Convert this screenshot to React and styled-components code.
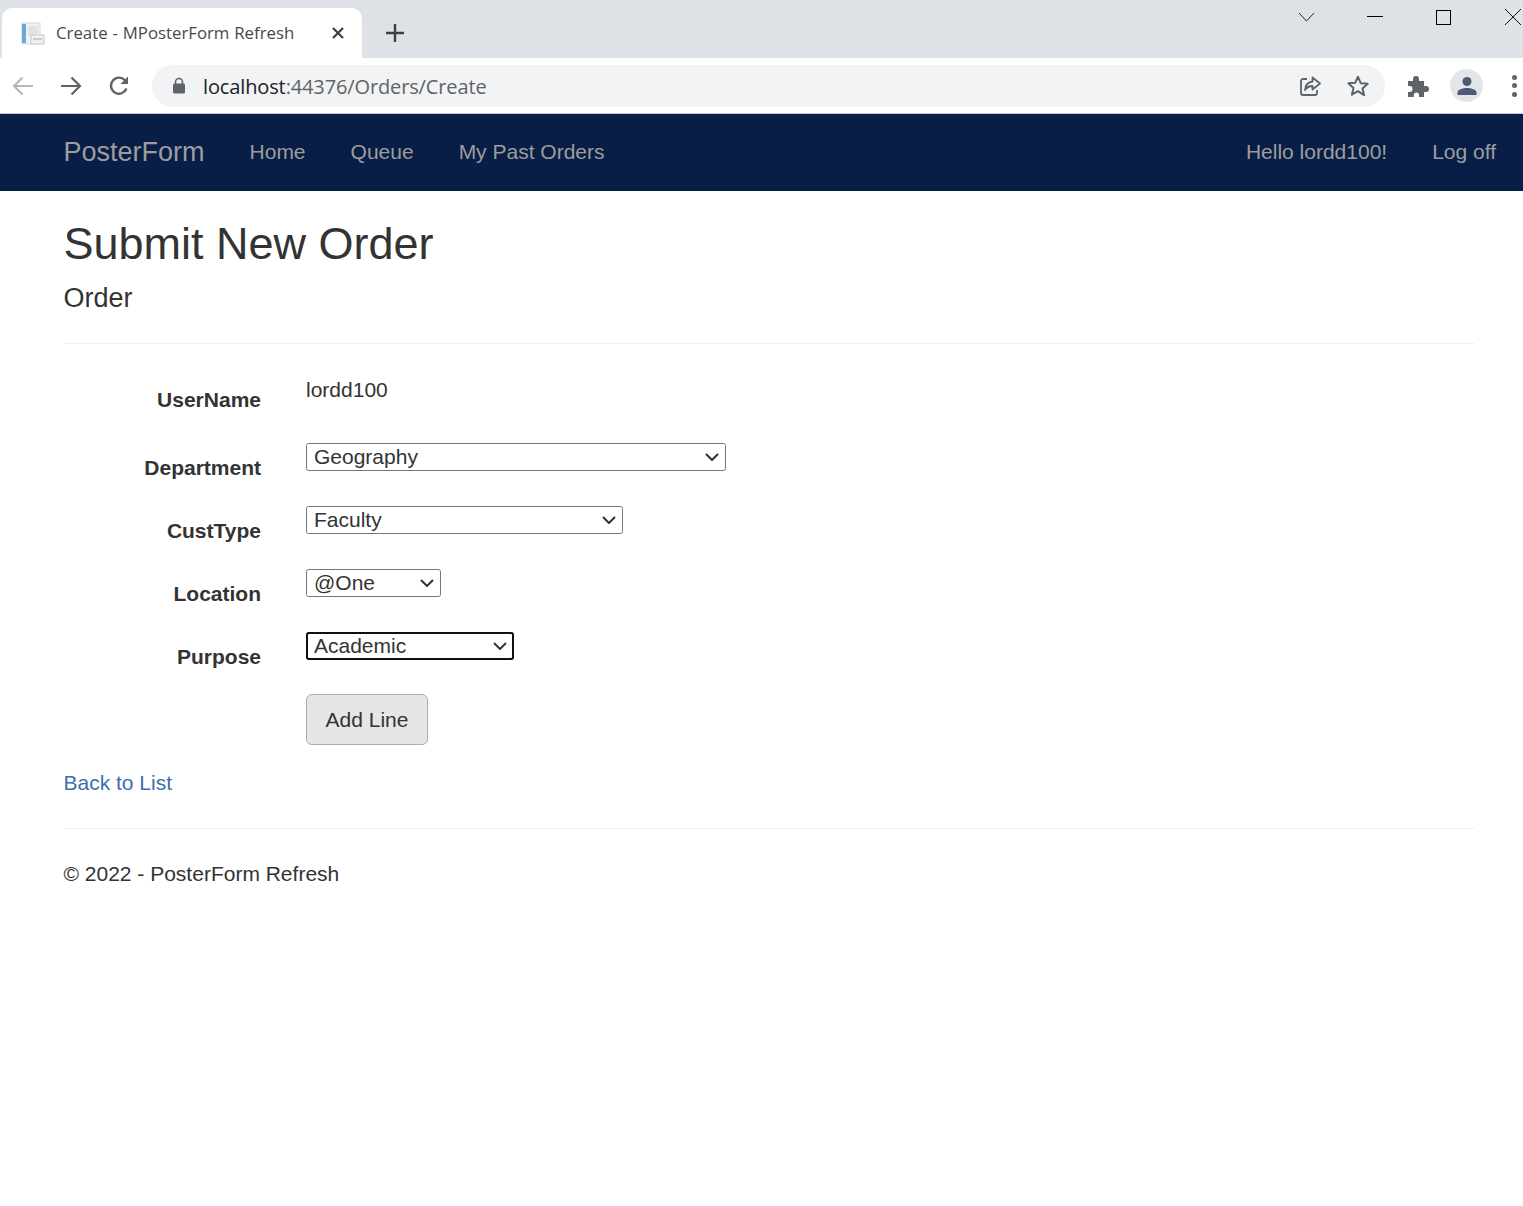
import React from "react";
import styled, { createGlobalStyle } from "styled-components";

const Global = createGlobalStyle`
    html, body{
        margin: 0;
        background: #fff;
        font-family: "Liberation Sans", Arial, sans-serif;
        color: #333;
    }
`

const TabStrip = styled.div`
    height: 58px;
    background: #dee1e6;
    display: flex;
    align-items: flex-end;
    padding-left: 2px;
    position: relative;
`

const Tab = styled.div`
    width: 360px;
    height: 50px;
    box-sizing: border-box;
    background: #fff;
    border-radius: 10px 10px 0 0;
    display: flex;
    align-items: center;
    padding: 0 16px 0 17px;
    color: #45494d;
    font: 16.8px "Open Sans", sans-serif;
    word-spacing: 0.5px;
    svg{ flex: none; }
`

const TabTitle = styled.span`
    flex: 1;
    margin-left: 11px;
    margin-top: -1px;
    white-space: nowrap;
`

const NewTab = styled.div`
    width: 18px;
    height: 18px;
    margin: 0 0 16px 24px;
    display: flex;
`

const WindowControls = styled.div`
    position: absolute;
    top: 8px;
    right: 2px;
    display: flex;
    align-items: center;
    gap: 53px;
    svg{ display: block; }
`

const Toolbar = styled.div`
    height: 55px;
    background: #fff;
    border-bottom: 1px solid #c8ccd4;
    display: flex;
    align-items: center;
    padding: 0 0 0 11px;
    box-sizing: content-box;
`

const NavIcon = styled.div`
    width: 24px;
    height: 24px;
    margin-right: 24px;
    display: flex;
    flex: none;
`

const Omnibox = styled.div`
    width: 1233px;
    height: 42px;
    margin-left: -3px;
    border-radius: 21px;
    background: #f1f3f4;
    display: flex;
    align-items: center;
    padding: 0 15px 0 20px;
    box-sizing: border-box;
    flex: none;
`

const Url = styled.div`
    flex: 1;
    margin-left: 17px;
    padding-top: 2px;
    font: 20px "Open Sans", sans-serif;
    letter-spacing: -0.13px;
    color: #5f6368;
    white-space: nowrap;
    b{
        font-weight: 400;
        color: #202124;
    }
`

const OmniIcon = styled.div`
    display: flex;
    margin-left: ${p => p.$gap || 0}px;
`

const ToolIcons = styled.div`
    display: flex;
    align-items: center;
    margin-left: 21px;
`

const Avatar = styled.div`
    width: 33px;
    height: 33px;
    border-radius: 50%;
    background: #e3e5ea;
    margin-left: 20px;
    display: flex;
    align-items: center;
    justify-content: center;
`

const Dots = styled.div`
    margin-left: 29px;
    display: flex;
    flex-direction: column;
    gap: 3.5px;
    i{
        width: 5px;
        height: 5px;
        border-radius: 50%;
        background: #5f6368;
    }
`

const Navbar = styled.nav`
    height: 77px;
    background: #081e46;
    display: flex;
    align-items: center;
    padding: 0 27px 0 63.5px;
`

const Brand = styled.a`
    font-size: 27px;
    color: #9d9d9d;
    margin-right: 45px;
`

const NavLink = styled.a`
    font-size: 21px;
    color: #9d9d9d;
    padding-bottom: 2px;
    margin-right: ${p => p.$last ? 0 : 45}px;
`

const Spacer = styled.div`
    flex: 1;
`

const Page = styled.main`
    padding: 0 49px 0 63.5px;
`

const Title = styled.h2`
    font-size: 45px;
    font-weight: 400;
    line-height: 50px;
    margin: 0;
    padding-top: 28px;
`

const SubTitle = styled.h4`
    font-size: 27px;
    font-weight: 400;
    line-height: 30px;
    margin: 14px 0 30px;
`

const Rule = styled.hr`
    border: 0;
    border-top: 1px solid #eee;
    margin: 0;
`

const Form = styled.div`
    padding-top: 29px;
    display: flex;
    flex-direction: column;
`

const Row = styled.div`
    display: flex;
    height: ${p => p.$h}px;
`

const Label = styled.label`
    width: 197.5px;
    flex: none;
    text-align: right;
    font-size: 21px;
    font-weight: 700;
    line-height: 30px;
    padding-top: ${p => p.$top}px;
    white-space: nowrap;
`

const Field = styled.div`
    margin-left: 45px;
    font-size: 21px;
    line-height: 30px;
`

const StaticValue = styled.div`
    padding-top: 2px;
`

const SelectBox = styled.div`
    position: relative;
    width: ${p => p.$w}px;
    height: 28px;
    svg{
        position: absolute;
        top: 10px;
        right: 7px;
        pointer-events: none;
    }
`

const Select = styled.select`
    display: block;
    width: 100%;
    height: 28px;
    box-sizing: border-box;
    appearance: none;
    font: 21px/24px "Liberation Sans", Arial, sans-serif;
    color: #333;
    background: #fff;
    border: 1px solid #767676;
    border-radius: 2.5px;
    padding: 0 0 0 7px;
    margin: 0;
    ${p => p.$focus && `
        outline: 2px solid #101010;
        outline-offset: -2px;
        border-radius: 3px;
    `}
`

const Button = styled.button`
    width: 122px;
    height: 51px;
    box-sizing: border-box;
    background: #e6e6e6;
    border: 1px solid #adadad;
    border-radius: 6px;
    font: 21px "Liberation Sans", Arial, sans-serif;
    color: #333;
    padding: 0;
`

const BackLink = styled.a`
    display: block;
    color: #3a70ae;
    font-size: 21px;
    line-height: 30px;
    margin-top: 23px;
`

const FooterRule = styled(Rule)`
    margin-top: 30px;
`

const Footer = styled.footer`
    font-size: 21px;
    line-height: 30px;
    margin-top: 30px;
`

const rows = [
    { label: "Department", options: ["Geography"], w: 420, h: 63 },
    { label: "CustType", options: ["Faculty"], w: 317, h: 63 },
    { label: "Location", options: ["@One"], w: 135, h: 63 },
    { label: "Purpose", options: ["Academic"], w: 208, h: 62, focus: true },
]

const App = () =>
    <>
        <Global />
        <TabStrip>
            <Tab>
                <svg width="26" height="26" viewBox="0 0 26 26">
                    <rect x="3" y="3" width="18" height="21" fill="#f1f2f4" stroke="#d5d8dc" />
                    <rect x="3" y="4" width="4" height="19" fill="#6aa8dc" />
                    <rect x="9" y="6" width="10" height="10" fill="#dfe2e6" />
                    <rect x="12" y="15" width="13" height="9" fill="#eef0f2" stroke="#c8ccd0" />
                    <rect x="14" y="18" width="9" height="2" fill="#c8ccd0" />
                </svg>
                <TabTitle>Create - MPosterForm Refresh</TabTitle>
                <svg width="16" height="16" viewBox="0 0 16 16">
                    <path d="M3 3l10 10M13 3L3 13" stroke="#3c4043" strokeWidth="2.2" />
                </svg>
            </Tab>
            <NewTab>
                <svg width="18" height="18" viewBox="0 0 18 18">
                    <path d="M9 0v18M0 9h18" stroke="#3c4043" strokeWidth="2.4" />
                </svg>
            </NewTab>
            <WindowControls>
                <svg width="16" height="18" viewBox="0 0 16 18">
                    <path d="M1 5l7.5 8 7.500-8" stroke="#222" fill="none" />
                </svg>
                <svg width="16" height="18" viewBox="0 0 16 18">
                    <path d="M0 8.500h16" stroke="#000" />
                </svg>
                <svg width="16" height="18" viewBox="0 0 16 18">
                    <rect x="0.5" y="2.500" width="14" height="14" stroke="#000" fill="none" />
                </svg>
                <svg width="16" height="18" viewBox="0 0 16 18">
                    <path d="M0 1l16 16M16 1L0 17" stroke="#111" fill="none" />
                </svg>
            </WindowControls>
        </TabStrip>
        <Toolbar>
            <NavIcon>
                <svg width="24" height="24" viewBox="0 0 24 24">
                    <path d="M22 12H3M11.500 3.500L3 12l8.500 8.500" stroke="#b4b7bb" strokeWidth="2.2" fill="none" />
                </svg>
            </NavIcon>
            <NavIcon>
                <svg width="24" height="24" viewBox="0 0 24 24">
                    <path d="M2 12h19M12.500 3.500L21 12l-8.500 8.500" stroke="#5f6368" strokeWidth="2.2" fill="none" />
                </svg>
            </NavIcon>
            <NavIcon>
                <svg width="24" height="24" viewBox="0 0 24 24">
                    <path d="M19.500 14.500a8 8 0 1 1-1.600-8.200" stroke="#5f6368" strokeWidth="2.3" fill="none" />
                    <path d="M21 2.500V10h-7.500z" fill="#5f6368" />
                </svg>
            </NavIcon>
            <Omnibox>
                <svg width="14" height="17" viewBox="0 0 14 17">
                    <path d="M3.500 7V5a3.500 3.500 0 0 1 7 0v2" stroke="#5f6368" strokeWidth="1.6" fill="none" />
                    <rect x="1" y="6.500" width="12" height="10" rx="1.500" fill="#5f6368" />
                </svg>
                <Url><b>localhost</b>:44376/Orders/Create</Url>
                <OmniIcon>
                    <svg width="24" height="24" viewBox="0 0 24 24">
                        <path d="M9 5H5a2 2 0 0 0-2 2v12a2 2 0 0 0 2 2h12a2 2 0 0 0 2-2v-3" stroke="#5f6368" strokeWidth="1.8" fill="none" />
                        <path d="M14.500 3.500L22 9.500l-7.500 6v-3.500c-3.500 0-5.500 1-7.500 4 .5-5 3-8 7.500-8.500z" stroke="#5f6368" strokeWidth="1.8" fill="none" strokeLinejoin="round" />
                    </svg>
                </OmniIcon>
                <OmniIcon $gap={24}>
                    <svg width="24" height="24" viewBox="0 0 24 24">
                        <path d="M12 2.800l2.800 6.400 6.900.6-5.200 4.600 1.600 6.800L12 17.100l-6.100 3.600 1.600-6.800-5.200-4.600 6.900-.6z" stroke="#5f6368" strokeWidth="2" fill="none" strokeLinejoin="round" />
                    </svg>
                </OmniIcon>
            </Omnibox>
            <ToolIcons>
                <svg width="24" height="24" viewBox="0 0 24 24">
                    <path d="M2 7h5V5a3 3 0 0 1 6 0v2h5v5h2a3 3 0 0 1 0 6h-2v5h-5v-2a2.600 2.600 0 0 0-5.200 0V23H2v-5h1.500a3 3 0 0 0 0-6H2z" fill="#5f6368" />
                </svg>
                <Avatar>
                    <svg width="22" height="22" viewBox="0 0 22 22">
                        <circle cx="11" cy="6.500" r="4.500" fill="#4d5b78" />
                        <path d="M1.500 20v-2.500c0-3 5-4.500 9.500-4.500s9.500 1.500 9.500 4.500V20z" fill="#4d5b78" />
                    </svg>
                </Avatar>
                <Dots><i /><i /><i /></Dots>
            </ToolIcons>
        </Toolbar>
        <Navbar>
            <Brand>PosterForm</Brand>
            <NavLink>Home</NavLink>
            <NavLink>Queue</NavLink>
            <NavLink>My Past Orders</NavLink>
            <Spacer />
            <NavLink>Hello lordd100!</NavLink>
            <NavLink $last>Log off</NavLink>
        </Navbar>
        <Page>
            <Title>Submit New Order</Title>
            <SubTitle>Order</SubTitle>
            <Rule />
            <Form>
                <Row $h={70}>
                    <Label $top={12}>UserName</Label>
                    <Field><StaticValue>lordd100</StaticValue></Field>
                </Row>
                {rows.map(r =>
                    <Row key={r.label} $h={r.h}>
                        <Label $top={10}>{r.label}</Label>
                        <Field>
                            <SelectBox $w={r.w}>
                                <Select $focus={r.focus} defaultValue={r.options[0]}>
                                    {r.options.map(o => <option key={o}>{o}</option>)}
                                </Select>
                                <svg width="14" height="8" viewBox="0 0 14 8">
                                    <path d="M1 1l6 6 6-6" stroke="#333" strokeWidth="2" fill="none" />
                                </svg>
                            </SelectBox>
                        </Field>
                    </Row>
                )}
                <Row $h={51}>
                    <Label $top={0} />
                    <Field><Button>Add Line</Button></Field>
                </Row>
            </Form>
            <BackLink>Back to List</BackLink>
            <FooterRule />
            <Footer>© 2022 - PosterForm Refresh</Footer>
        </Page>
    </>

export default App
